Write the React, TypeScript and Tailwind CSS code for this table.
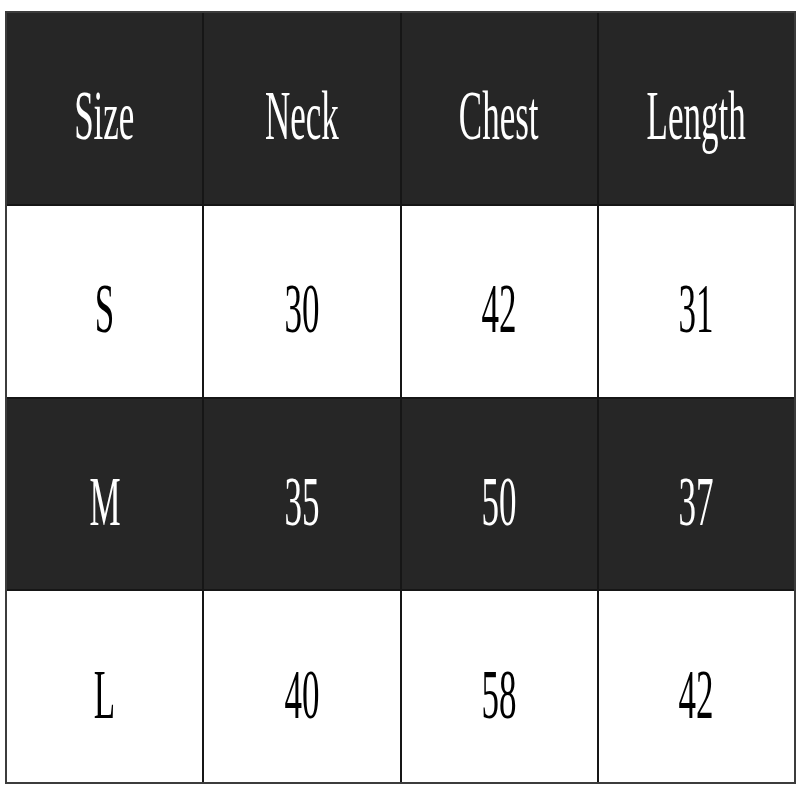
const rows = [
  { dark: true, cells: ["Size", "Neck", "Chest", "Length"] },
  { dark: false, cells: ["S", "30", "42", "31"] },
  { dark: true, cells: ["M", "35", "50", "37"] },
  { dark: false, cells: ["L", "40", "58", "42"] },
];

const App = () => {
  return (
    <div className="w-[800px] h-[800px] bg-white pt-[11px] pl-[5px]">
      <div className="w-[791px] h-[773px] grid grid-cols-4 grid-rows-4 gap-[2px] bg-[#161616] border-2 border-[#3c3c3c]">
        {rows.map((row, r) =>
          row.cells.map((text, c) => (
            <div
              key={`${r}-${c}`}
              className={`flex items-center justify-center ${row.dark ? "bg-[#262626] text-white" : "bg-white text-black"}`}
            >
              <span
                className="inline-block text-[70px] leading-none scale-x-[0.5] translate-y-[8px]"
                style={{ fontFamily: '"Liberation Serif", serif' }}
              >
                {text}
              </span>
            </div>
          ))
        )}
      </div>
    </div>
  );
};

export default App;
